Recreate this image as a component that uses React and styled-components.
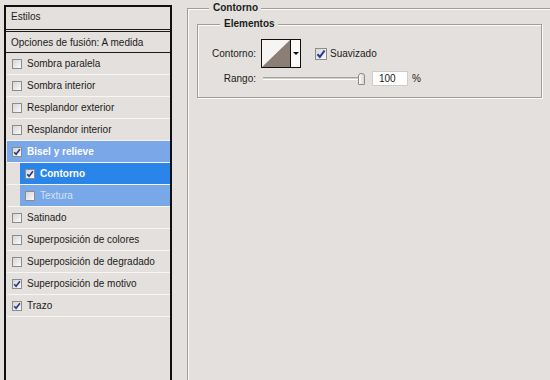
import styled, { createGlobalStyle } from "styled-components";

const GlobalStyle = createGlobalStyle`
  html, body {
    margin: 0;
    padding: 0;
  }
  body {
    background: #e3e0dd;
    font-family: "Liberation Sans", Arial, sans-serif;
    font-size: 10px;
    color: #1c1c1c;
    overflow: hidden;
  }
`;

const styleItems = [
  { label: "Sombra paralela" },
  { label: "Sombra interior" },
  { label: "Resplandor exterior" },
  { label: "Resplandor interior" },
  { label: "Bisel y relieve", checked: true, state: "active" },
  { label: "Contorno", checked: true, state: "selected", sub: true },
  { label: "Textura", state: "dim", sub: true },
  { label: "Satinado" },
  { label: "Superposición de colores" },
  { label: "Superposición de degradado" },
  { label: "Superposición de motivo", checked: true },
  { label: "Trazo", checked: true },
];

const rowBg = {
  active: "#79a7e8",
  selected: "#2a85ea",
  dim: "#79a8e9",
};

const rowColor = {
  active: "#ffffff",
  selected: "#ffffff",
  dim: "#d4e0f2",
};

function Check({ checked, size = 10 }) {
  return (
    <Box $size={size}>
      {checked && (
        <svg width={size - 2} height={size - 2} viewBox="0 0 8 8">
          <path
            d="M1.2 4.2 L3.1 6.3 L6.9 1.2"
            fill="none"
            stroke="#27358a"
            strokeWidth="1.6"
          />
        </svg>
      )}
    </Box>
  );
}

export default function App() {
  return (
    <Page>
      <GlobalStyle />
      <Panel>
        <HeaderRow>Estilos</HeaderRow>
        <OptionsRow>Opciones de fusión: A medida</OptionsRow>
        {styleItems.map((item) => (
          <Row key={item.label} $sub={item.sub}>
            <RowInner $state={item.state} $sub={item.sub}>
              <Check checked={item.checked} />
              <RowLabel $state={item.state}>{item.label}</RowLabel>
            </RowInner>
          </Row>
        ))}
      </Panel>

      <Group>
        <Legend>Contorno</Legend>
        <InnerGroup>
          <Legend>Elementos</Legend>
          <FieldRow>
            <FieldLabel>Contorno:</FieldLabel>
            <CurvePicker>
              <svg width="28" height="27" viewBox="0 0 28 27">
                <rect width="28" height="27" fill="#f7f5f3" />
                <polygon points="0,27 28,0 28,27" fill="#8a7e77" />
              </svg>
              <Arrow />
            </CurvePicker>
            <CheckLabel>
              <Check checked size={12} />
              Suavizado
            </CheckLabel>
          </FieldRow>
          <FieldRow $tight>
            <FieldLabel>Rango:</FieldLabel>
            <Slider>
              <Track />
              <Thumb />
            </Slider>
            <NumberBox>100</NumberBox>
            <Unit>%</Unit>
          </FieldRow>
        </InnerGroup>
      </Group>
    </Page>
  );
}

const Page = styled.main`
  display: flex;
  align-items: flex-start;
  width: 550px;
  height: 380px;
  overflow: hidden;
`;

const Panel = styled.section`
  flex-shrink: 0;
  box-sizing: border-box;
  width: 168px;
  height: 380px;
  margin: 5px 0 0 4px;
  border: 2px solid #101010;
  border-bottom: none;
`;

const HeaderRow = styled.div`
  height: 22px;
  line-height: 20px;
  padding-left: 5px;
  border-bottom: 3px double #1a1a1a;
`;

const OptionsRow = styled.div`
  height: 20px;
  line-height: 21px;
  padding-left: 5px;
  border-bottom: 1px solid #1a1a1a;
`;

const Row = styled.div`
  height: 21px;
  margin-left: 1px;
  border-bottom: 1px solid #f6f5f3;
`;

const RowInner = styled.div`
  display: flex;
  align-items: center;
  gap: 5px;
  height: 100%;
  margin-left: ${(p) => (p.$sub ? "13px" : "0")};
  padding-left: 5px;
  background: ${(p) => rowBg[p.$state] || "transparent"};
`;

const RowLabel = styled.span`
  color: ${(p) => rowColor[p.$state] || "#1c1c1c"};
  font-weight: ${(p) =>
    p.$state === "active" || p.$state === "selected" ? 700 : 400};
`;

const Box = styled.span`
  display: inline-flex;
  align-items: center;
  justify-content: center;
  box-sizing: border-box;
  width: ${(p) => p.$size}px;
  height: ${(p) => p.$size}px;
  flex-shrink: 0;
  border: 1px solid #8c8c8c;
  background: linear-gradient(135deg, #d6d6d6, #f9f9f9);
`;

const Group = styled.fieldset`
  flex-shrink: 0;
  width: 380px;
  height: 400px;
  margin: 2px 0 0 15px;
  padding: 0 0 0 9px;
  border: 1px solid #a19d99;
  box-shadow: inset 1px 1px 0 #fbfaf9, 1px 1px 0 #fbfaf9;
`;

const Legend = styled.legend`
  margin-left: 12px;
  padding: 0 3px 0 4px;
  background: #e3e0dd;
  font-weight: 700;
  line-height: 12px;
`;

const InnerGroup = styled.fieldset`
  box-sizing: border-box;
  width: 345px;
  margin: 4px 0 0 0;
  padding: 9px 0 11px 8px;
  border: 1px solid #a19d99;
  box-shadow: inset 1px 1px 0 #fbfaf9, 1px 1px 0 #fbfaf9;

  & > legend {
    margin-left: 14px;
  }
`;

const FieldRow = styled.div`
  display: flex;
  align-items: center;
  margin-top: ${(p) => (p.$tight ? "3px" : "0")};
`;

const FieldLabel = styled.span`
  width: 50px;
  margin-right: 5px;
  text-align: right;
`;

const CurvePicker = styled.div`
  display: flex;
  box-sizing: border-box;
  width: 40px;
  height: 29px;
  border: 1px solid #111;
  background: #fbfaf9;
`;

const Arrow = styled.span`
  flex: 1;
  border-left: 1px solid #111;
  display: flex;
  align-items: center;
  justify-content: center;

  &::after {
    content: "";
    border-left: 3px solid transparent;
    border-right: 3px solid transparent;
    border-top: 3px solid #111;
  }
`;

const CheckLabel = styled.label`
  display: flex;
  align-items: center;
  gap: 3px;
  margin-left: 14px;
`;

const Slider = styled.div`
  position: relative;
  width: 102px;
  height: 14px;
  margin-left: 2px;
  display: flex;
  align-items: center;
`;

const Track = styled.div`
  flex: 1;
  height: 1px;
  border-top: 1px solid #a6a29e;
  border-bottom: 1px solid #ffffff;
  background: #d2cfcb;
`;

const Thumb = styled.span`
  position: absolute;
  right: 0;
  top: 1px;
  width: 5px;
  height: 10px;
  border: 1px solid #8d8985;
  border-radius: 3px 3px 1px 1px;
  background: linear-gradient(90deg, #fafafa, #d9d7d4);
`;

const NumberBox = styled.div`
  box-sizing: border-box;
  width: 36px;
  height: 15px;
  margin-left: 7px;
  padding-left: 6px;
  line-height: 14px;
  border: 1px solid #d0cdc9;
  background: #ffffff;
`;

const Unit = styled.span`
  margin-left: 4px;
`;
